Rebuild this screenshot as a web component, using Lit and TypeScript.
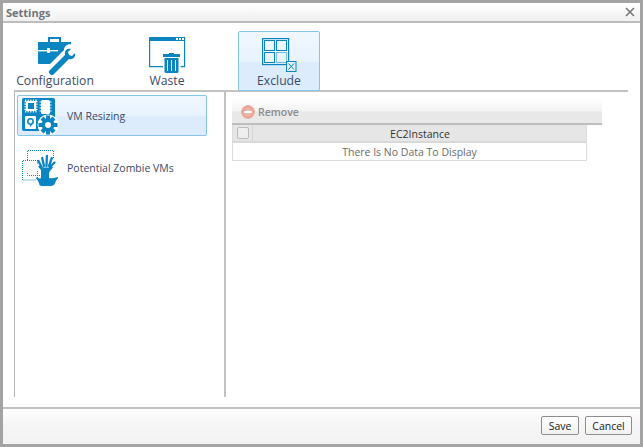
import { LitElement, html, css } from "lit";
import { customElement } from "lit/decorators.js";

const B = "#0a85c1";

const briefcase = html`<svg class="ic" width="40" height="40" viewBox="34 34 40 40">
  <path fill="${B}" d="M47 36h13v5h-2v-3h-9v3h-2z"/>
  <path fill="${B}" d="M37 41h33v7.500c-4-1.500-8 .5-8 5.500l-9 9H38q-1 0-1-1z"/>
  <rect x="37" y="49" width="20" height="1.400" fill="#fff"/>
  <rect x="46" y="47" width="3" height="5" rx="1" fill="#fff"/>
  <path fill="#fff" d="M46 66l17-17c0-4 4-7 9-5l2 8c-3 3-6 4-9 3L52 72z"/>
  <path fill="${B}" d="M48 70l16-16c-1-4 2-7 6-6l-3 3 1 3 3 1 3-3c1 4-2 7-6 6L52 74c-2 1-5-2-4-4z"/>
</svg>`;

const waste = html`<svg class="ic" width="40" height="40" viewBox="147 34 40 40">
  <path fill="none" stroke="${B}" stroke-width="1.200" d="M149.600 36.600h35v29h-4M163 65.600h-13.400v-29"/>
  <rect x="149" y="36" width="36" height="4" fill="${B}"/>
  <rect x="176" y="37" width="2" height="2" fill="#fff"/><rect x="179" y="37" width="2" height="2" fill="#fff"/><rect x="182" y="37" width="2" height="2" fill="#fff"/>
  <rect x="163" y="53" width="17" height="3" fill="${B}"/><rect x="169" y="52" width="5" height="2" fill="${B}"/>
  <path fill="${B}" d="M164.500 57h14v13.500q0 1.500-1.500 1.500h-11q-1.500 0-1.500-1.500z"/>
  <path stroke="#fff" stroke-width="1" d="M167.500 59v11M171.500 59v11M175.500 59v11"/>
</svg>`;

const exclude = html`<svg class="ic" width="40" height="40" viewBox="259 34 40 40">
  <rect x="262.600" y="37.600" width="26" height="26" fill="none" stroke="${B}" stroke-width="1.200"/>
  <rect x="264.500" y="39.500" width="10" height="10" fill="none" stroke="${B}"/>
  <rect x="276.500" y="39.500" width="10" height="10" fill="none" stroke="${B}"/>
  <rect x="264.500" y="51.500" width="10" height="10" fill="none" stroke="${B}"/>
  <rect x="276.500" y="51.500" width="10" height="10" fill="none" stroke="${B}" stroke-dasharray="1 1"/>
  <rect x="286.500" y="60.500" width="9.500" height="10" fill="#e3f0fc" stroke="${B}"/>
  <path d="M288.500 62.500l5.500 6M294 62.500l-5.500 6" stroke="${B}" fill="none"/>
</svg>`;

const vm = html`<svg class="ic" width="38" height="38" viewBox="21 96 38 38">
  <rect x="22" y="97" width="33" height="33" rx="2" fill="${B}"/>
  <rect x="27" y="101" width="8" height="8" fill="none" stroke="#fff" stroke-width="2"/>
  <path d="M25 99.500h12M25 110.500h12" stroke="#fff" stroke-width="2" stroke-dasharray="1.200 1.400" fill="none"/>
  <path d="M25.500 100v10M36.500 100v10" stroke="#fff" stroke-width="2" stroke-dasharray="1.200 1.400" fill="none"/>
  <rect x="41" y="99" width="9" height="14" rx="1.500" fill="#fff"/>
  <path d="M39.500 101h2M39.500 104h2M39.500 107h2M39.500 110h2M49.500 101h2M49.500 104h2M49.500 107h2M49.500 110h2" stroke="#fff"/>
  <rect x="25" y="115" width="11" height="13" rx="1" fill="#fff"/>
  <circle cx="30.500" cy="120.500" r="2.700" fill="none" stroke="${B}" stroke-width="1.500"/><path d="M33 121l-3 4.500" stroke="${B}" stroke-width="1.300"/>
  <circle cx="48" cy="124" r="10.500" fill="#fff"/>
  <g fill="${B}"><circle cx="48" cy="124" r="6.500"/>
    <path d="M46 114.500h4v4h-4zM46 129.500h4v4h-4zM38.500 122h4v4h-4zM53.500 122h4v4h-4z"/>
    <path d="M40.500 118.500l3-3 3 3-3 3zM52.500 115.500l3 3-3 3-3-3zM40.500 129.500l3-3 3 3-3 3zM52.500 126.500l3 3-3 3-3-3z"/></g>
  <circle cx="48" cy="124" r="3" fill="#fff"/>
</svg>`;

const zombie = html`<svg class="ic" width="38" height="38" viewBox="21 148 38 38">
  <path d="M27.500 159v-9.500h26v8M40 174.500H27.500v-3" fill="none" stroke="${B}" stroke-dasharray="1 1"/>
  <path d="M38 159.500H22.500v19.500H36" fill="none" stroke="${B}" stroke-dasharray="1 1"/>
  <path d="M37.500 159.500v3M37.500 170v9" fill="none" stroke="${B}" stroke-dasharray="1 1"/>
  <path fill="${B}" d="M41 178v-9l-3-3.500 2-1 3.500 2h5l3-2 1.500 2-3 3.500-1 2V178z"/>
  <path d="M41.500 166l-3-6M44 165l-1.800-8M46.500 165l.4-10M49 165l2.800-8M50 166l4.500-4.500" stroke="${B}" stroke-width="2.300" stroke-linecap="round" fill="none"/>
  <path fill="${B}" d="M36 176.500q3 1.500 6 .5h5q4 1 11-1v1q-2 2-3 5-1 3-4 3h-9q-3 0-3-3-1-3-3-4.500z"/>
</svg>`;

const BAND = css`linear-gradient(#f0f7fe 0%, #e8f3fe 50%, #dcecfc 53%, #dcecfd 100%)`;

@customElement("app-root")
export class AppRoot extends LitElement {
  static styles = css`
    :host { display: block; width: 643px; height: 447px; font-family: "Open Sans", "Noto Sans", sans-serif; }
    * { box-sizing: border-box; }
    .frame { width: 643px; height: 447px; background: #a3a3a3; padding: 3px; }
    .win { height: 441px; background: #fff; display: flex; flex-direction: column; }
    .title { height: 20px; flex: none; display: flex; align-items: center; justify-content: space-between; padding: 0 3px;
      background: linear-gradient(#fff, #f0f0f0); border-bottom: 2px solid #bdbdbd; font-size: 11px; font-weight: 700; color: #6e747c; }
    .close { width: 12px; height: 12px; display: block; margin-right: 1px; }
    .tabs { height: 69px; flex: none; display: flex; gap: 30px; padding: 8px 0 0; border-bottom: 2px solid #c2c2c2; margin: 0 12px 0 11px; }
    .tab { width: 82px; height: 60px; display: flex; flex-direction: column; align-items: center; padding-top: 3px; border: 1px solid transparent; border-radius: 2px;
      font-size: 12.200px; color: #3b4a6b; line-height: 16px; }
    .tab.on { background: ${BAND}; border-color: #86c4e8; }
    .ic { display: block; flex: none; }
    .lbl { margin-top: -2px; }
    .body { flex: 1; display: flex; margin: 0 0 10px 11px; min-height: 0; }
    .left { width: 212px; flex: none; border-left: 1px solid #b5b5b5; border-right: 2px solid #c2c2c2; padding: 3px 0 0 2px; display: flex; flex-direction: column; gap: 11px; }
    .item { width: 190px; height: 41px; display: flex; align-items: center; gap: 8px; padding-left: 3px; border: 1px solid transparent; border-radius: 2px; font-size: 10.500px; color: #3b4a6b; }
    .item.on { background: ${BAND}; border-color: #86c4e8; }
    .right { flex: 1; padding: 6px 0 0 6px; }
    .toolbar { width: 370px; height: 27px; display: flex; align-items: center; gap: 3px; padding: 2px 0 0 9px;
      background: linear-gradient(#fff 0%, #f4f4f4 50%, #e8e8e8 56%, #e9e9e9 100%); border-bottom: 2px solid #bdbdbd;
      font-size: 10.500px; font-weight: 600; color: #8a8a8a; }
    .grid { width: 355px; border: 1px solid #dcdcdc; border-top: 0; }
    .head { height: 18px; display: flex; background: #e6e6e6; border-bottom: 2px solid #d9d9d9; font-size: 10.500px; color: #333; }
    .chk { width: 20px; flex: none; display: flex; align-items: center; justify-content: center; border-right: 1px solid #d6d6d6; }
    .box { width: 12px; height: 12px; background: #eee; border: 1px solid #bcbcbc; border-radius: 2px; }
    .col { flex: 1; text-align: center; line-height: 18px; padding-left: 1px; }
    .row { height: 17px; text-align: center; font-size: 10.500px; color: #6a6a6a; line-height: 18px; }
    .foot { height: 37px; flex: none; border-top: 2px solid #c2c2c2; background: linear-gradient(#fff 0%, #f6f6f6 40%, #f2f2f2 100%); display: flex; justify-content: flex-end; gap: 6px; padding: 7px 8px 0 0; }
    .foot button { height: 19px; padding: 0; border: 1px solid #8e8e8e; border-radius: 2px; background: linear-gradient(#fff, #f1f1f1); font: 10.500px "Open Sans", sans-serif; color: #222; }
    .save { width: 38px; } .cancel { width: 47px; }
  `;
  render() {
    return html`<div class="frame"><div class="win">
      <div class="title"><span>Settings</span>
        <svg class="close" viewBox="0 0 12 12"><path d="M2 2l8 8M10 2l-8 8" stroke="#777" stroke-width="1.600" fill="none"/></svg></div>
      <div class="tabs">
        <div class="tab">${briefcase}<span class="lbl">Configuration</span></div>
        <div class="tab">${waste}<span class="lbl">Waste</span></div>
        <div class="tab on">${exclude}<span class="lbl">Exclude</span></div>
      </div>
      <div class="body">
        <div class="left">
          <div class="item on">${vm}<span>VM Resizing</span></div>
          <div class="item">${zombie}<span>Potential Zombie VMs</span></div>
        </div>
        <div class="right">
          <div class="toolbar">
            <svg width="14" height="14" viewBox="0 0 14 14"><defs><radialGradient id="r"><stop offset="0" stop-color="#f6c9bd"/><stop offset="1" stop-color="#e59a88"/></radialGradient></defs><circle cx="7" cy="7" r="6.500" fill="url(#r)" stroke="#e8b5a8"/><rect x="3" y="6" width="8" height="2" fill="#fff"/></svg>
            <span>Remove</span>
          </div>
          <div class="grid">
            <div class="head"><div class="chk"><div class="box"></div></div><div class="col">EC2Instance</div></div>
            <div class="row">There Is No Data To Display</div>
          </div>
        </div>
      </div>
      <div class="foot"><button class="save">Save</button><button class="cancel">Cancel</button></div>
    </div></div>`;
  }
}
